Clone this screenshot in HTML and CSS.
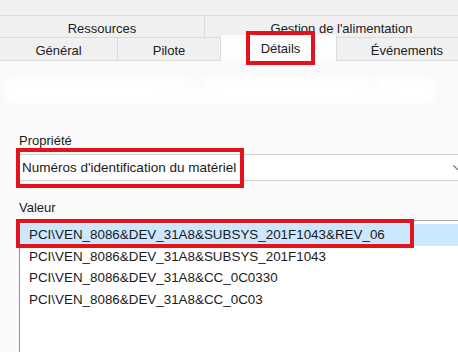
FILE: index.html
```html
<!DOCTYPE html>
<html lang="fr">
<head>
<meta charset="utf-8">
<title>Détails</title>
<link rel="stylesheet" href="styles.css">
</head>
<body>
<div class="page">
  <div class="tabs">
    <div class="tabrow row1">
      <div class="tab w-res">Ressources</div>
      <div class="tab w-gest">Gestion de l'alimentation</div>
    </div>
    <div class="tabrow row2">
      <div class="tab w-gen">Général</div>
      <div class="tab w-pil">Pilote</div>
      <div class="tab w-det selected">Détails</div>
      <div class="tab w-evt">Événements</div>
    </div>
  </div>
  <div class="content">
    <div class="smudge"><span class="ghost">· &nbsp;-&nbsp; ''''' &nbsp;·</span><span class="ghost g2">· '' &nbsp; ·</span></div>
    <div class="label l-prop">Propriété</div>
    <div class="combo">
      <span class="combo-text">Numéros d'identification du matériel</span>
      <svg class="chev" width="11" height="6" viewBox="0 0 11 6"><path d="M0.5 0.5 L5.5 5.5 L10.5 0.5" fill="none" stroke="#6a6a6a" stroke-width="1.1"/></svg>
    </div>
    <div class="label l-val">Valeur</div>
    <div class="list">
      <div class="item sel">PCI\VEN_8086&amp;DEV_31A8&amp;SUBSYS_201F1043&amp;REV_06</div>
      <div class="item">PCI\VEN_8086&amp;DEV_31A8&amp;SUBSYS_201F1043</div>
      <div class="item">PCI\VEN_8086&amp;DEV_31A8&amp;CC_0C0330</div>
      <div class="item">PCI\VEN_8086&amp;DEV_31A8&amp;CC_0C03</div>
    </div>
  </div>
  <div class="mark mark-tab"></div>
  <div class="mark mark-combo"></div>
  <div class="mark mark-item"></div>
</div>
</body>
</html>
```
FILE: styles.css
```css
html, body {
  margin: 0;
  padding: 0;
  overflow: hidden;
}
body {
  background: #fafafa;
  font-family: "Liberation Sans", Arial, sans-serif;
  font-size: 13px;
  color: #1a1a1a;
}
.page {
  position: relative;
  width: 458px;
  height: 352px;
  overflow: hidden;
}
.tabs {
  background: #f0f0f0;
  padding-top: 15px;
  height: 46px;
  width: 520px;
}
.tabrow {
  display: flex;
  border-top: 1px solid #dcdcdc;
}
.row1 { height: 21px; }
.row2 {
  height: 22px;
  border-bottom: 1px solid #dcdcdc;
}
.tab {
  box-sizing: border-box;
  display: flex;
  align-items: center;
  justify-content: center;
  border-right: 1px solid #dcdcdc;
  color: #202020;
  flex: none;
}
.row1 .tab { padding-top: 3px; }
.row2 .tab { padding-top: 3px; }
.w-res { width: 205px; }
.w-gest { width: 274px; }
.w-gen { width: 118px; }
.w-pil { width: 103px; }
.w-det { width: 116px; }
.w-evt { width: 141px; }
.tab.selected {
  background: #fdfdfd;
  margin-top: -3px;
  height: 26px;
  padding-top: 0;
  padding-left: 4px;
  border-bottom: none;
}
.content {
  padding-left: 19px;
  overflow: hidden;
}
.smudge {
  margin: 17px 0 0 -14px;
  width: 430px;
  height: 26px;
  background: #ffffff;
  border-radius: 10px;
  filter: blur(3px);
  position: relative;
}
.ghost {
  position: absolute;
  left: 150px;
  top: 2px;
  color: #c4c4c4;
  font-size: 11px;
  letter-spacing: 2px;
}
.ghost.g2 { left: 355px; }
.label {
  line-height: 16px;
}
.l-prop { margin-top: 29px; }
.l-val { margin-top: 19px; }
.combo {
  margin-top: 5px;
  margin-right: -6px;
  height: 25px;
  border-top: 1px solid #d2d2d2;
  border-bottom: 1px solid #d2d2d2;
  background: #ffffff;
  display: flex;
  align-items: center;
  justify-content: space-between;
  padding-left: 3px;
  font-size: 13.5px;
}
.combo-text { line-height: 25px; }
.chev { flex: none; }
.list {
  margin-top: 4px;
  border-top: 1px solid #a8a8a8;
  border-left: 1px solid #8f8f8f;
  background: #ffffff;
  padding-top: 3px;
  height: 140px;
  font-size: 13.4px;
}
.item {
  line-height: 21.5px;
  padding-left: 9px;
  white-space: nowrap;
}
.item.sel { background: #cce8ff; }
.mark {
  position: absolute;
  box-sizing: border-box;
  border: 4px solid #e3131d;
}
.mark-tab {
  left: 246px;
  top: 31px;
  width: 69px;
  height: 34px;
}
.mark-combo {
  left: 16px;
  top: 148px;
  width: 228px;
  height: 40px;
}
.mark-item {
  left: 16px;
  top: 219px;
  width: 398px;
  height: 29px;
}
```
